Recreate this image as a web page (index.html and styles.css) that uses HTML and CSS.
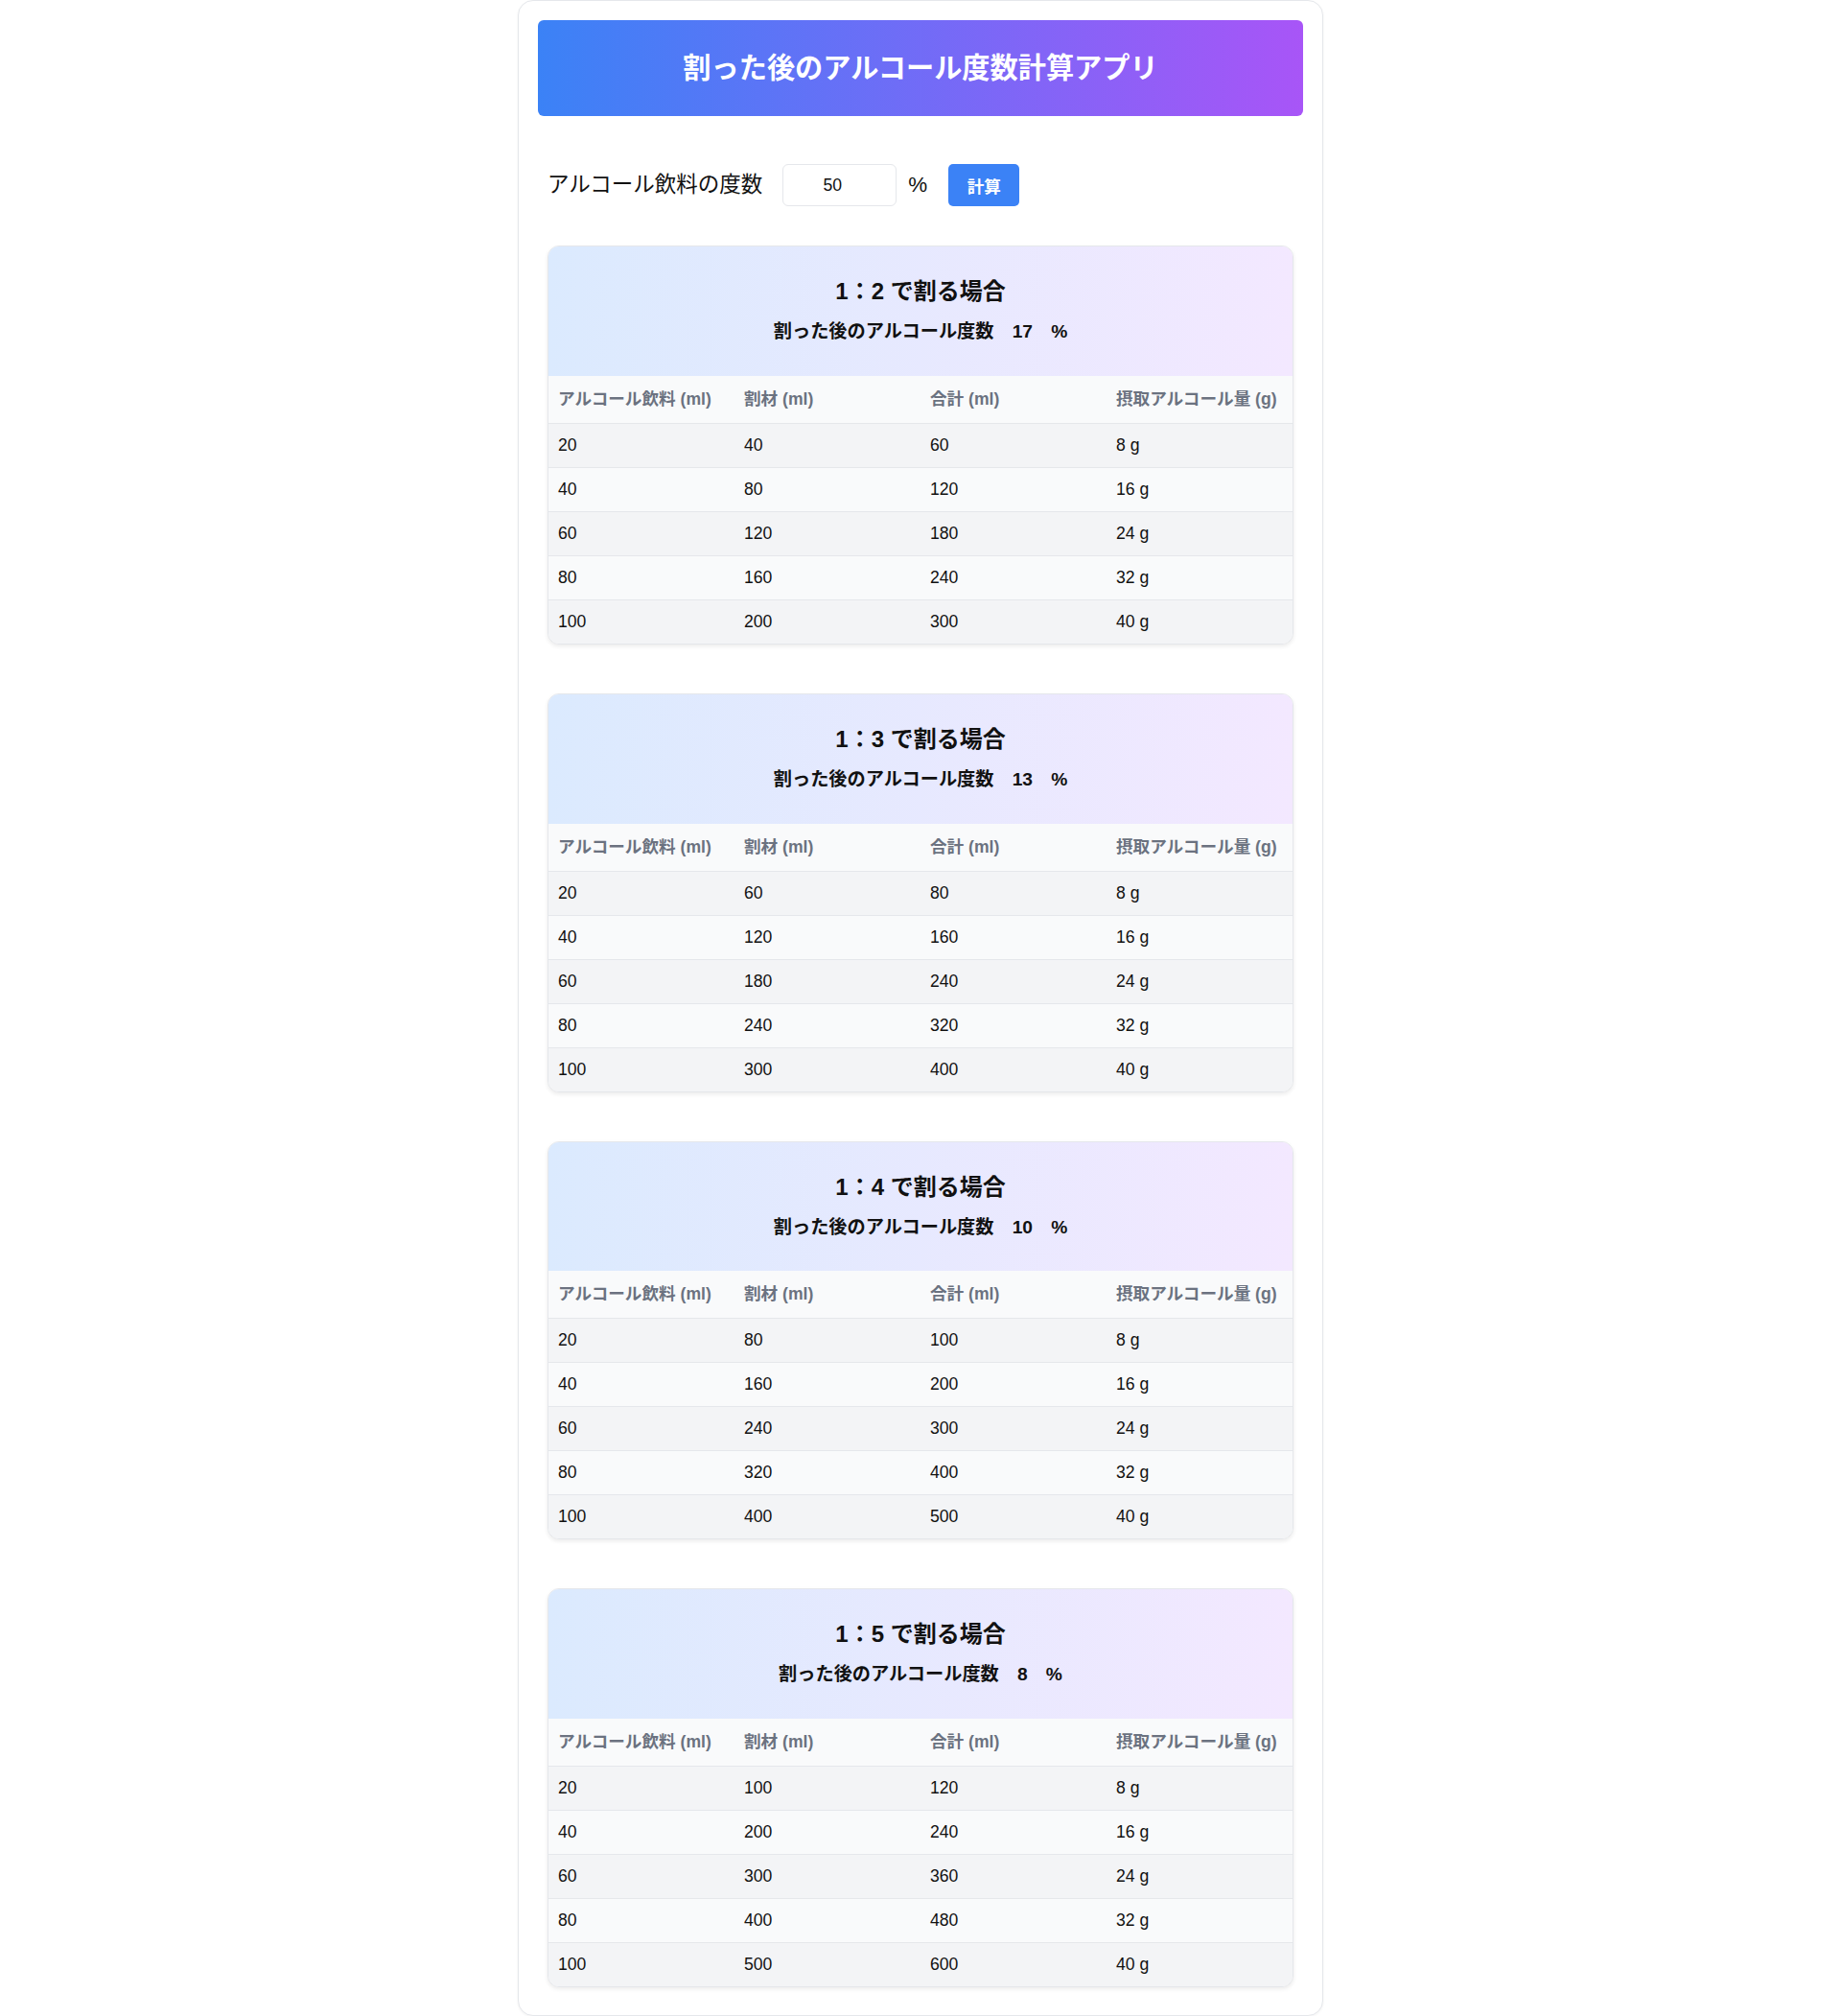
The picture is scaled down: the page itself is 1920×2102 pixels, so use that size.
FILE: index.html
```html
<!DOCTYPE html>
<html lang="ja">
<head>
<meta charset="UTF-8">
<title>割った後のアルコール度数計算アプリ</title>
<link rel="stylesheet" href="styles.css">
</head>
<body>
<div class="app">
  <header class="app-header">
    <h1 class="app-title">割った後のアルコール度数計算アプリ</h1>
  </header>
  <main class="content">
    <div class="controls">
      <label class="controls-label" for="degree">アルコール飲料の度数</label>
      <input class="degree-input" id="degree" type="number" value="50">
      <span class="percent">%</span>
      <button class="calc-button" type="button">計算</button>
    </div>

    <div class="cards">
      <section class="card">
        <div class="card-head">
          <h2 class="card-title">1：2 で割る場合</h2>
          <p class="card-sub">割った後のアルコール度数　17　%</p>
        </div>
        <table class="mix-table">
          <thead><tr><th>アルコール飲料 (ml)</th><th>割材 (ml)</th><th>合計 (ml)</th><th>摂取アルコール量 (g)</th></tr></thead>
          <tbody>
            <tr><td>20</td><td>40</td><td>60</td><td>8 g</td></tr>
            <tr><td>40</td><td>80</td><td>120</td><td>16 g</td></tr>
            <tr><td>60</td><td>120</td><td>180</td><td>24 g</td></tr>
            <tr><td>80</td><td>160</td><td>240</td><td>32 g</td></tr>
            <tr><td>100</td><td>200</td><td>300</td><td>40 g</td></tr>
          </tbody>
        </table>
      </section>

      <section class="card">
        <div class="card-head">
          <h2 class="card-title">1：3 で割る場合</h2>
          <p class="card-sub">割った後のアルコール度数　13　%</p>
        </div>
        <table class="mix-table">
          <thead><tr><th>アルコール飲料 (ml)</th><th>割材 (ml)</th><th>合計 (ml)</th><th>摂取アルコール量 (g)</th></tr></thead>
          <tbody>
            <tr><td>20</td><td>60</td><td>80</td><td>8 g</td></tr>
            <tr><td>40</td><td>120</td><td>160</td><td>16 g</td></tr>
            <tr><td>60</td><td>180</td><td>240</td><td>24 g</td></tr>
            <tr><td>80</td><td>240</td><td>320</td><td>32 g</td></tr>
            <tr><td>100</td><td>300</td><td>400</td><td>40 g</td></tr>
          </tbody>
        </table>
      </section>

      <section class="card">
        <div class="card-head">
          <h2 class="card-title">1：4 で割る場合</h2>
          <p class="card-sub">割った後のアルコール度数　10　%</p>
        </div>
        <table class="mix-table">
          <thead><tr><th>アルコール飲料 (ml)</th><th>割材 (ml)</th><th>合計 (ml)</th><th>摂取アルコール量 (g)</th></tr></thead>
          <tbody>
            <tr><td>20</td><td>80</td><td>100</td><td>8 g</td></tr>
            <tr><td>40</td><td>160</td><td>200</td><td>16 g</td></tr>
            <tr><td>60</td><td>240</td><td>300</td><td>24 g</td></tr>
            <tr><td>80</td><td>320</td><td>400</td><td>32 g</td></tr>
            <tr><td>100</td><td>400</td><td>500</td><td>40 g</td></tr>
          </tbody>
        </table>
      </section>

      <section class="card">
        <div class="card-head">
          <h2 class="card-title">1：5 で割る場合</h2>
          <p class="card-sub">割った後のアルコール度数　8　%</p>
        </div>
        <table class="mix-table">
          <thead><tr><th>アルコール飲料 (ml)</th><th>割材 (ml)</th><th>合計 (ml)</th><th>摂取アルコール量 (g)</th></tr></thead>
          <tbody>
            <tr><td>20</td><td>100</td><td>120</td><td>8 g</td></tr>
            <tr><td>40</td><td>200</td><td>240</td><td>16 g</td></tr>
            <tr><td>60</td><td>300</td><td>360</td><td>24 g</td></tr>
            <tr><td>80</td><td>400</td><td>480</td><td>32 g</td></tr>
            <tr><td>100</td><td>500</td><td>600</td><td>40 g</td></tr>
          </tbody>
        </table>
      </section>
    </div>
  </main>
</div>
</body>
</html>
```

FILE: styles.css
```css
* {
  box-sizing: border-box;
}

body {
  margin: 0;
  background: #ffffff;
  color: #111111;
  font-family: "Liberation Sans", "Noto Sans CJK JP", sans-serif;
}

.app {
  width: 840px;
  margin: 0 auto;
  padding: 20px;
  background: #ffffff;
  border: 1px solid #e5e7eb;
  border-radius: 16px;
  box-shadow: 0 1px 3px rgba(0, 0, 0, 0.05);
}

.app-header {
  height: 100px;
  margin-bottom: 40px;
  border-radius: 6px;
  background: linear-gradient(to right, #3b82f6, #a855f7);
  display: flex;
  align-items: center;
  justify-content: center;
}

.app-title {
  margin: 0;
  color: #ffffff;
  font-size: 29.2px;
  line-height: 40px;
  font-weight: 700;
}

.content {
  padding: 10px 10px 9px;
}

.controls {
  display: flex;
  align-items: center;
  height: 44px;
  margin-bottom: 41px;
}

.controls-label {
  font-size: 22.5px;
  line-height: 30px;
  margin-right: 21px;
  color: #111111;
}

.degree-input {
  width: 119px;
  height: 44px;
  margin: 0 12px 0 0;
  padding: 0 6px;
  border: 1px solid #e5e7eb;
  border-radius: 6px;
  background: #ffffff;
  color: #111111;
  font-family: inherit;
  font-size: 17.6px;
  text-align: center;
}

.percent {
  font-size: 22.4px;
  line-height: 30px;
  margin-right: 22px;
}

.calc-button {
  height: 44px;
  padding: 0 19.5px;
  border: none;
  border-radius: 5px;
  background: #3b82f6;
  color: #ffffff;
  font-family: inherit;
  font-size: 17.6px;
  font-weight: 700;
}

.cards {
  display: flex;
  flex-direction: column;
  gap: 51px;
}

.card {
  border: 1px solid #e5e7eb;
  border-radius: 12px;
  overflow: hidden;
  background: #ffffff;
  box-shadow: 0 2px 4px rgba(0, 0, 0, 0.08);
}

.card-head {
  padding: 29px 16px 31px;
  text-align: center;
  background: linear-gradient(to right, #dbeafe, #f3e8ff);
}

.card-title {
  margin: 0 0 10px;
  font-size: 24px;
  line-height: 36px;
  font-weight: 700;
  color: #111111;
}

.card-sub {
  margin: 0;
  font-size: 19.2px;
  line-height: 28.8px;
  font-weight: 700;
  color: #111111;
}

.mix-table {
  width: 100%;
  table-layout: fixed;
  border-collapse: separate;
  border-spacing: 0;
}

.mix-table th {
  padding: 12px 10px;
  line-height: 25px;
  font-size: 17.6px;
  font-weight: 700;
  text-align: left;
  color: #6b7280;
  background: #f9fafb;
  border-bottom: 1px solid #e5e7eb;
  white-space: nowrap;
}

.mix-table td {
  padding: 10px;
  line-height: 25px;
  font-size: 17.6px;
  color: #111111;
  border-bottom: 1px solid #e5e7eb;
}

.mix-table tbody tr:nth-child(odd) td {
  background: #f3f4f6;
}

.mix-table tbody tr:nth-child(even) td {
  background: #f9fafb;
}

.mix-table tbody tr:last-child td {
  border-bottom: none;
}
```
